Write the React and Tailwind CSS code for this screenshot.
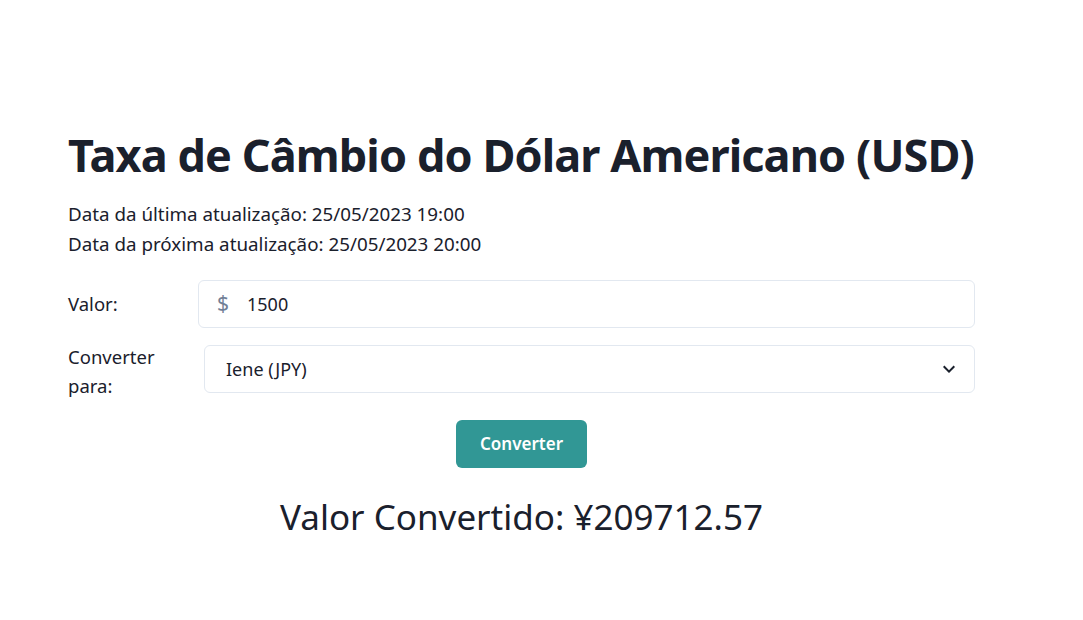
import { useState } from "react";

const font = { fontFamily: '"Noto Sans", "Open Sans", sans-serif' };

function ChevronDown() {
  return (
    <svg className="h-[24px] w-[24px] text-[#1a202c]" viewBox="0 0 24 24" fill="currentColor">
      <path d="M16.59 8.59L12 13.17 7.41 8.59 6 10l6 6 6-6z" />
    </svg>
  );
}

export default function App() {
  const [amount, setAmount] = useState("1500");
  const [currency, setCurrency] = useState("JPY");

  return (
    <div className="min-h-[620px] bg-white text-[#1a202c]" style={font}>
      <div className="ml-[68px] w-[907px] pt-[128px]">
        <h1 className="whitespace-nowrap text-[45px] font-bold leading-[54px] tracking-[-0.02em]">
          Taxa de Câmbio do Dólar Americano (USD)
        </h1>

        <div className="mt-[17px] text-[18.8px] leading-[30px]">
          <p>Data da última atualização: 25/05/2023 19:00</p>
          <p>Data da próxima atualização: 25/05/2023 20:00</p>
        </div>

        <div className="mt-[21px] flex items-center">
          <label className="w-[130px] shrink-0 text-[18.5px]">Valor:</label>
          <div className="relative flex h-[48px] flex-1 items-center rounded-md border border-[#e2e8f0]">
            <span className="flex w-[48px] justify-center text-[21px] text-[#718096]">$</span>
            <input
              className="h-full flex-1 bg-transparent pr-4 text-[18px] outline-none"
              value={amount}
              onChange={(e) => setAmount(e.target.value)}
            />
          </div>
        </div>

        <div className="mt-[17px] flex h-[48px] items-start">
          <label className="-mt-[3px] w-[136px] shrink-0 pr-8 text-[18.5px] leading-[29px]">Converter para:</label>
          <div className="relative flex h-[48px] flex-1 items-center rounded-md border border-[#e2e8f0] pl-4 pr-[13px]">
            <span className="flex-1 pl-[5px] text-[18px]">{currency === "JPY" ? "Iene (JPY)" : currency}</span>
            <ChevronDown />
            <button className="absolute inset-0 opacity-0" onClick={() => setCurrency("JPY")} aria-label="Converter para" />
          </div>
        </div>

        <div className="mt-[27px] flex justify-center">
          <button className="h-[48px] rounded-md bg-[#319795] px-6 text-[17px] font-semibold text-white">
            Converter
          </button>
        </div>

        <p className="mt-[28px] text-center text-[35px] leading-[42px]">Valor Convertido: ¥209712.57</p>
      </div>
    </div>
  );
}
